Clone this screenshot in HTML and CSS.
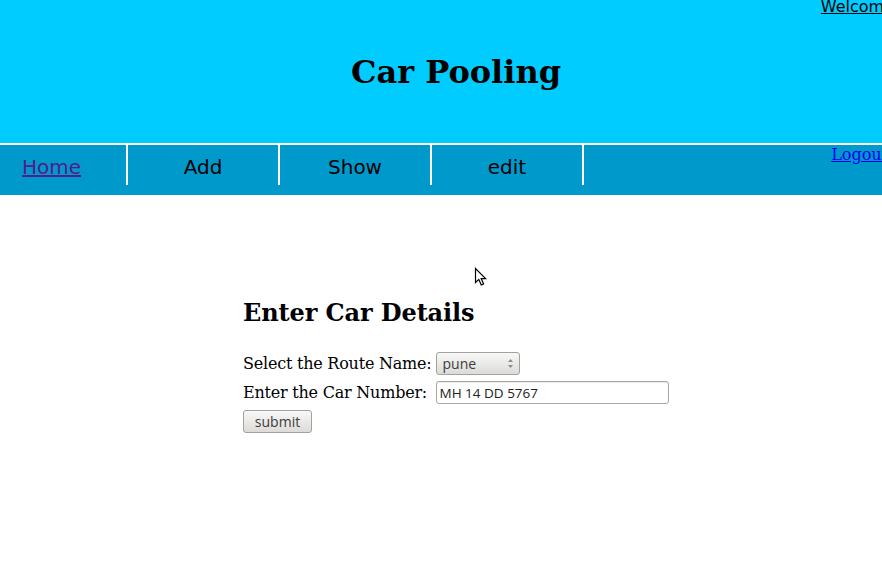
FILE: index.html
```html
<!DOCTYPE html>
<html lang="en">
<head>
<meta charset="utf-8">
<title>Car Pooling</title>
<link rel="stylesheet" href="styles.css">
</head>
<body>
<header class="top">
  <a class="welcome" href="#">Welcome</a>
  <h1 class="title">Car Pooling</h1>
</header>
<nav class="menu">
  <ul class="menu-list">
    <li class="item item-home"><a class="home-link" href="#">Home</a></li>
    <li class="item">Add</li>
    <li class="item">Show</li>
    <li class="item">edit</li>
  </ul>
  <a class="logout" href="#">Logout</a>
</nav>
<main class="content">
  <h2 class="heading">Enter Car Details</h2>
  <form class="car-form">
    <label class="label">Select the Route Name:</label>
    <div class="select-wrap">
      <select class="select"><option>pune</option></select>
      <svg class="select-arrows" width="7" height="11" viewBox="0 0 7 11"><path d="M3.5 1 L6 4 L1 4 Z" fill="#8a8a8a"/><path d="M1 7 L6 7 L3.5 10 Z" fill="#8a8a8a"/></svg>
    </div>
    <label class="label">Enter the Car Number:</label>
    <input class="text-input" type="text" value="MH 14 DD 5767">
    <button class="submit" type="button">submit</button>
  </form>
</main>
<svg class="cursor" width="14" height="20" viewBox="0 0 14 20"><path d="M1.5 1.5 L1.5 15.5 L4.8 12.4 L7.3 18 L9.6 17 L7.2 11.6 L11.6 11.6 Z" fill="#fff" stroke="#000" stroke-width="1.2" stroke-linejoin="miter"/></svg>
</body>
</html>
```

FILE: styles.css
```css
html, body {
  margin: 0;
  padding: 0;
  overflow: hidden;
}

body {
  width: 882px;
  height: 588px;
  position: relative;
  background: #fff;
  font-family: "DejaVu Serif", serif;
  font-size: 16px;
  color: #000;
}

.top {
  background: #00ccff;
  height: 143px;
  border-bottom: 2px solid #fff;
  overflow: hidden;
}

.welcome {
  float: right;
  margin-right: -12px;
  margin-top: -1px;
  font-family: "DejaVu Sans", sans-serif;
  font-size: 16px;
  line-height: 16px;
  color: #000;
}

.title {
  margin: 53px 0 0;
  padding-left: 30px;
  text-align: center;
  font-size: 32px;
  font-weight: bold;
  line-height: normal;
}

.menu {
  background: #0099cc;
  height: 50px;
  display: flex;
  overflow: hidden;
}

.menu-list {
  list-style: none;
  margin: 0;
  padding: 0;
  display: flex;
  align-items: flex-start;
}

.item {
  width: 150px;
  height: 36px;
  padding-top: 4px;
  line-height: 36px;
  border-right: 2px solid #fff;
  text-align: center;
  font-family: "DejaVu Sans", sans-serif;
  font-size: 20px;
  color: #000;
}

.item-home {
  width: 104px;
  padding-left: 22px;
  text-align: left;
}

.home-link {
  color: #551a8b;
}

.logout {
  margin-left: auto;
  margin-right: -6px;
  align-self: flex-start;
  line-height: normal;
  color: #0000ee;
  font-size: 16px;
}

.content {
  padding: 103px 0 0 243px;
}

.heading {
  margin: 0 0 25px;
  font-size: 24px;
  font-weight: bold;
  line-height: normal;
  letter-spacing: -0.1px;
}

.car-form {
  display: grid;
  grid-template-columns: auto auto;
  justify-content: start;
  align-items: center;
  column-gap: 5px;
  row-gap: 6px;
}

.label {
  font-size: 16px;
  line-height: normal;
  letter-spacing: -0.22px;
}

.select-wrap {
  position: relative;
  width: 84px;
  height: 23px;
}

.select {
  appearance: none;
  -webkit-appearance: none;
  width: 84px;
  height: 23px;
  box-sizing: border-box;
  margin: 0;
  padding: 0 0 0 5px;
  border: 1px solid #a3a29e;
  border-radius: 3px;
  background: linear-gradient(#f8f8f7, #dcdbd8);
  font-family: "Open Sans", "Noto Sans", sans-serif;
  font-size: 14px;
  color: #3c3c3c;
}

.select-arrows {
  position: absolute;
  right: 6px;
  top: 6px;
}

.text-input {
  width: 233px;
  height: 23px;
  box-sizing: border-box;
  margin: 0;
  padding: 0 0 0 2px;
  border: 1px solid #a8a7a3;
  border-radius: 3px;
  box-shadow: inset 0 1px 1px rgba(0, 0, 0, 0.08);
  background: #fff;
  font-family: "Open Sans", "Noto Sans", sans-serif;
  font-size: 13.5px;
  color: #222;
}

.submit {
  grid-column: 1 / 3;
  justify-self: start;
  width: 69px;
  height: 23px;
  box-sizing: border-box;
  margin: 0;
  padding: 0;
  border: 1px solid #a3a29e;
  border-radius: 3px;
  background: linear-gradient(#f8f8f7, #dcdbd8);
  font-family: "Open Sans", "Noto Sans", sans-serif;
  font-size: 14px;
  color: #3c3c3c;
}

.cursor {
  position: absolute;
  left: 474px;
  top: 267px;
}
```
